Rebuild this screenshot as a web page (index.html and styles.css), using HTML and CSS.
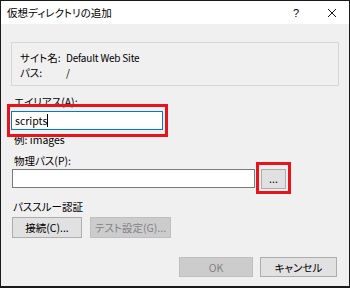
FILE: index.html
```html
<!DOCTYPE html>
<html lang="ja">
<head>
  <meta charset="UTF-8" />
  <title>仮想ディレクトリの追加</title>
  <link rel="stylesheet" href="styles.css">
</head>
<body>
  <div class="dialog">
    <div class="titlebar">
      <span class="title">仮想ディレクトリの追加</span>
      <span class="help">?</span>
      <span class="close">
        <svg width="10" height="10" viewBox="0 0 10 10">
          <path d="M1 1 L9 9 M9 1 L1 9" stroke="#111" stroke-width="1" fill="none"/>
        </svg>
      </span>
    </div>

    <div class="content">
      <div class="group">
        <div class="info-row"><span class="info-label">サイト名:</span><span class="latin">Default Web Site</span></div>
        <div class="info-row"><span class="info-label">パス:</span><span class="latin">/</span></div>
      </div>

      <div class="label label-alias">エイリアス(A):</div>
      <div class="field field-alias focused marked">scripts<span class="caret"></span></div>
      <div class="label hint">例: images</div>

      <div class="label label-path">物理パス(P):</div>
      <div class="path-row">
        <div class="field field-path"></div>
        <button class="btn btn-browse marked-browse">...</button>
      </div>

      <div class="label label-pass">パススルー認証</div>
      <div class="pass-row">
        <button class="btn btn-connect">接続(C)...</button>
        <button class="btn btn-test" disabled>テスト設定(G)...</button>
      </div>

      <div class="footer">
        <button class="btn btn-ok" disabled>OK</button>
        <button class="btn btn-cancel">キャンセル</button>
      </div>
    </div>
  </div>
</body>
</html>
```

FILE: styles.css
```css
* {
  margin: 0;
  padding: 0;
  box-sizing: border-box;
}

body {
  font-family: "Noto Sans CJK JP", "Noto Sans", sans-serif;
  font-size: 10.5px;
  font-feature-settings: "palt";
  color: #000;
  background: #fff;
}

.dialog {
  width: 350px;
  height: 288px;
  border: 1px solid #1a1a1a;
  border-bottom-width: 2px;
  background: #f0f0f0;
  display: flex;
  flex-direction: column;
}

.titlebar {
  height: 23px;
  background: #fff;
  display: flex;
  align-items: center;
  padding-left: 6px;
}

.title {
  flex: 1;
  font-size: 10.5px;
}

.help {
  width: 12px;
  font-size: 11px;
  font-family: "Liberation Sans", sans-serif;
  margin-right: 22px;
}

.close {
  display: flex;
  margin-right: 12px;
}

.content {
  padding: 18px 10px 0 10px;
  display: flex;
  flex-direction: column;
}

.group {
  height: 44px;
  width: 328px;
  border: 1px solid #d6d6d6;
  padding: 7px 0 0 8px;
}

.info-row {
  display: flex;
  line-height: 15px;
}

.info-label {
  width: 46px;
}

.latin {
  font-size: 10px;
  letter-spacing: -0.2px;
}

.label {
  line-height: 14px;
  padding-left: 3px;
}

.label-alias { margin-top: 9px; }
.hint { margin-top: 3px; }
.label-path { margin-top: 7px; }
.label-pass { margin-top: 11px; padding-left: 2px; }

.field {
  height: 19px;
  background: #fff;
  border: 1px solid #7a7a7a;
  line-height: 17px;
  padding-left: 3px;
  position: relative;
}

.field.focused {
  border-color: #0078d7;
}

.field-alias {
  width: 152px;
  margin-top: 2px;
}

.caret {
  display: inline-block;
  width: 1px;
  height: 13px;
  background: #000;
  vertical-align: -2px;
}

.path-row {
  display: flex;
  gap: 6px;
  margin-top: 1px;
  margin-left: 1px;
}

.field-path {
  width: 243px;
}

.btn {
  font-family: inherit;
  font-size: 10.5px;
  font-feature-settings: "palt";
  background: #e1e1e1;
  border: 1px solid #adadad;
  color: #000;
  height: 21px;
}

.btn:disabled {
  background: #cccccc;
  border-color: #bfbfbf;
  color: #838383;
}

.btn-browse {
  width: 25px;
  height: 20px;
  position: relative;
  line-height: 10px;
}

.marked::after,
.marked-browse::after {
  content: "";
  position: absolute;
  border: 3px solid #e8141b;
  pointer-events: none;
}

.marked::after {
  top: -8px;
  bottom: -8px;
  left: -5px;
  right: -6px;
}

.marked-browse::after {
  top: -8px;
  bottom: -6px;
  left: -6px;
  right: -6px;
}

.pass-row {
  display: flex;
  gap: 8px;
  margin-top: 3px;
  margin-left: 1px;
}

.btn-connect { width: 70px; }
.btn-test { width: 81px; }

.footer {
  display: flex;
  justify-content: flex-end;
  gap: 7px;
  margin-top: 19px;
  padding-right: 2px;
}

.btn-ok { width: 74px; height: 20px; }
.btn-cancel { width: 77px; height: 20px; }
```
